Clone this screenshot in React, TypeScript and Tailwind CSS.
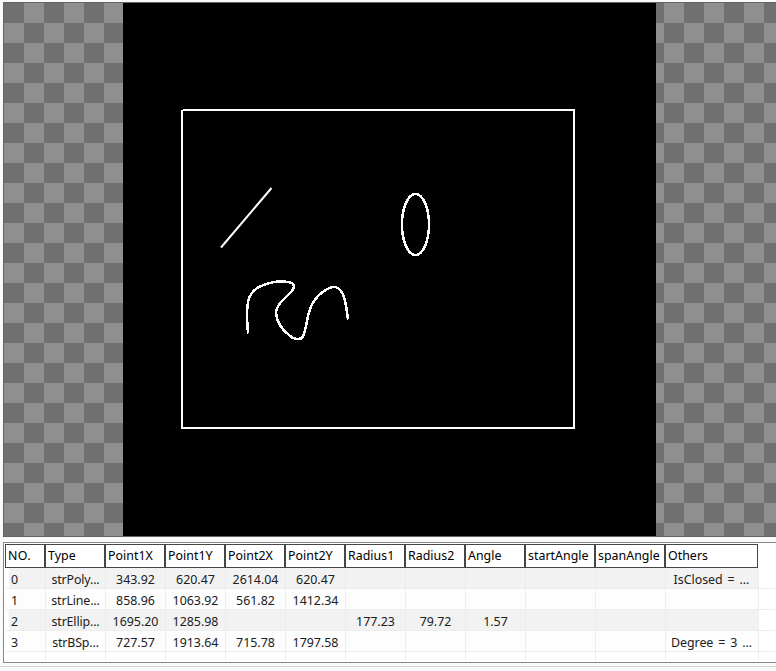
import React from 'react';

const columns = ['NO.', 'Type', 'Point1X', 'Point1Y', 'Point2X', 'Point2Y', 'Radius1', 'Radius2', 'Angle', 'startAngle', 'spanAngle', 'Others'];

const rows = [
  ['0', 'strPoly...', '343.92', '620.47', '2614.04', '620.47', '', '', '', '', '', 'IsClosed = ...'],
  ['1', 'strLine...', '858.96', '1063.92', '561.82', '1412.34', '', '', '', '', '', ''],
  ['2', 'strEllip...', '1695.20', '1285.98', '', '', '177.23', '79.72', '1.57', '', '', ''],
  ['3', 'strBSp...', '727.57', '1913.64', '715.78', '1797.58', '', '', '', '', '', 'Degree = 3 ...'],
];

const grid = 'grid grid-cols-[40px_repeat(8,60px)_70px_70px_93px_1fr]';

const tracking: Record<string, string> = {
  'NO.': 'tracking-[0.3px]',
};

function Viewer() {
  return (
    <div className="h-[535px] border border-r-0 border-[#646464] bg-[repeating-conic-gradient(#8f8f8f_0_25%,#707070_0_50%)] bg-size-[40px_40px]">
      <svg className="ml-[119px] block h-[533px] w-[533px] bg-black" viewBox="123 3 533 533" fill="none" stroke="#fff" strokeWidth="2">
        <path d="M183 110H574V428H182V110" shapeRendering="crispEdges" />
        <path d="M221 247.5L271.5 188" />
        <g shapeRendering="crispEdges" strokeWidth="2.5">
          <ellipse cx="415.5" cy="224.5" rx="13.5" ry="30.5" />
          <path d="M248 333.5C247 322 246.5 308 248.5 300C251.5 290 258 286.500 265 284.500C272 282 281 280.500 287 282C294 282.500 296 286 291.500 291.500C285 299 276 304 276 313C277 324 283 330.500 289.500 335.500C293 339 300 341 303 336.500C307 328 307 310 314 301C319 293.500 328 287 335 287C345 288.500 346 306 348 319.500" />
        </g>
      </svg>
    </div>
  );
}

function Header() {
  return (
    <div className={`${grid} h-6`}>
      {columns.map((name) => (
        <div
          key={name}
          className={`overflow-hidden border border-[#464646] bg-white pl-[2px] leading-[21px] whitespace-nowrap text-black ${tracking[name] ?? 'tracking-[0.02px]'}`}
        >
          {name}
        </div>
      ))}
    </div>
  );
}

function Row({ cells, shaded }: { cells: string[]; shaded: boolean }) {
  return (
    <div className={`${grid} h-[21px] border-b border-[#ededed]`}>
      {cells.map((cell, i) => (
        <div
          key={i}
          className={`h-5 overflow-hidden leading-[24px] whitespace-nowrap ${shaded ? 'bg-[#f2f2f2]' : 'bg-[#fdfdfd]'} ${
            i === 0 ? 'ml-1 pl-[2px]' : 'border-l border-[#ededed] text-center'
          } ${i === 1 ? 'tracking-[-0.15px]' : ''} ${i === 11 ? 'pr-px tracking-[-0.02px] [word-spacing:1.7px]' : ''}`}
        >
          {cell}
        </div>
      ))}
      <div className="border-l border-[#ededed]" />
    </div>
  );
}

export default function App() {
  return (
    <div className="h-[671px] overflow-hidden bg-[#fafafb] pt-[2px] pl-[3px] font-['Noto_Sans','Open_Sans',sans-serif]">
      <Viewer />
      <div className="mt-[5px] h-[121px] border border-r-0 border-[#828790] bg-white pt-px pl-px text-[12.4px] text-[#202020]">
        <Header />
        <div className="mr-px">
          {rows.map((cells, i) => (
            <Row key={i} cells={cells} shaded={i % 2 === 0} />
          ))}
          <div className={`${grid} h-[9px]`}>
            {['blank', ...columns].map((name, i) => (
              <div key={i} className={i === 0 ? '' : 'border-l border-[#ededed]'} />
            ))}
          </div>
        </div>
      </div>
      <div className="mt-[3px] -ml-[3px] h-px bg-[#d5d5d5]" />
    </div>
  );
}
